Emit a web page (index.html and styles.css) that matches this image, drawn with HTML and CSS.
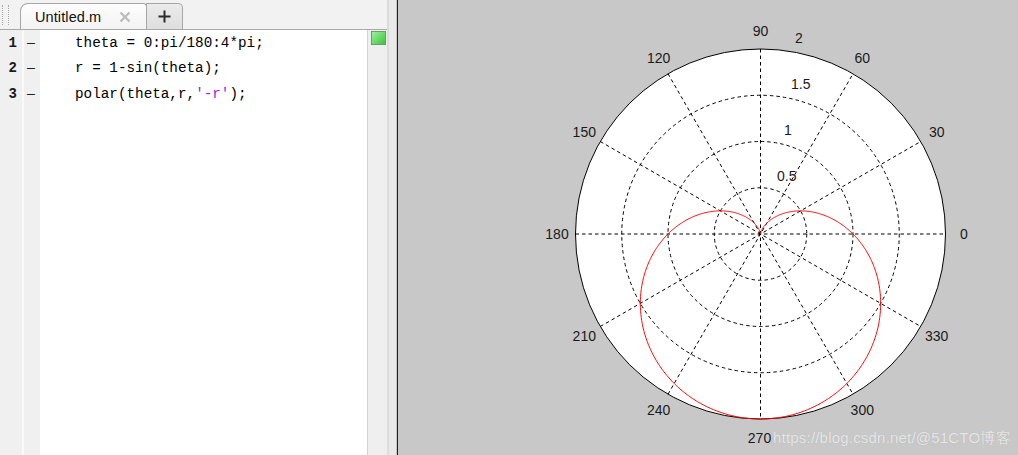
FILE: index.html
```html
<!DOCTYPE html>
<html>
<head>
<meta charset="utf-8">
<title>polar</title>
<link rel="stylesheet" href="styles.css">
</head>
<body>
<div class="app">
  <section class="editor">
    <div class="tabbar">
      <div class="grip"></div>
      <div class="tab active">
        <span class="tab-title">Untitled.m</span>
        <svg class="tab-close" width="12" height="12" viewBox="0 0 12 12"><path d="M1.5 1.5 L10.5 10.5 M10.5 1.5 L1.5 10.5" stroke="#bdbdbd" stroke-width="2.4" fill="none"/></svg>
      </div>
      <div class="tab add">
        <svg width="13" height="13" viewBox="0 0 13 13"><path d="M6.5 0.5 V12.5 M0.5 6.5 H12.5" stroke="#2a2a2a" stroke-width="2" fill="none"/></svg>
      </div>
    </div>
    <div class="editor-body">
      <div class="gutter">
        <div class="numbers">
          <div class="ln">1</div>
          <div class="ln">2</div>
          <div class="ln">3</div>
        </div>
        <div class="gutter-sep"></div>
        <div class="marks">
          <div class="mk">—</div>
          <div class="mk">—</div>
          <div class="mk">—</div>
        </div>
      </div>
      <div class="code">
        <div class="line">theta = 0:pi/180:4*pi;</div>
        <div class="line">r = 1-sin(theta);</div>
        <div class="line">polar(theta,r,<span class="str">'-r'</span>);</div>
      </div>
      <div class="rightcol"><div class="status-ok"></div></div>
    </div>
  </section>
  <div class="splitter"></div>
  <section class="figure">
    <svg class="plot" width="620" height="455" viewBox="0 0 620 455">
      <circle cx="362.5" cy="234" r="185" fill="#ffffff" stroke="none"/>
      <g class="grid" stroke="#000" stroke-width="1" fill="none" stroke-dasharray="3.5 3">
        <circle cx="362.5" cy="234" r="46.25"/>
        <circle cx="362.5" cy="234" r="92.5"/>
        <circle cx="362.5" cy="234" r="138.75"/>
        <line x1="177.5" y1="234" x2="547.5" y2="234"/>
        <line x1="362.5" y1="49" x2="362.5" y2="419"/>
        <line x1="202.28" y1="141.5" x2="522.72" y2="326.5"/>
        <line x1="202.28" y1="326.5" x2="522.72" y2="141.5"/>
        <line x1="270" y1="73.78" x2="455" y2="394.22"/>
        <line x1="270" y1="394.22" x2="455" y2="73.78"/>
      </g>
      <circle cx="362.5" cy="234" r="185" fill="none" stroke="#000" stroke-width="1"/>
      <polyline id="curve" fill="none" stroke="#ff0000" stroke-width="1" points=""/>
      <g class="labels">
        <text x="362.5" y="30.5">90</text>
        <text x="464.3" y="57.8">60</text>
        <text x="260.7" y="57.8">120</text>
        <text x="538.7" y="132.3">30</text>
        <text x="186.3" y="132.3">150</text>
        <text x="566" y="234">0</text>
        <text x="159" y="234">180</text>
        <text x="538.7" y="335.7">330</text>
        <text x="186.3" y="335.7">210</text>
        <text x="464.3" y="410.2">300</text>
        <text x="260.7" y="410.2">240</text>
        <text x="361.5" y="437.5">270</text>
      </g>
      <g class="rlabels">
        <text x="397" y="37.5">2</text>
        <text x="393" y="84">1.5</text>
        <text x="386" y="129.5">1</text>
        <text x="379" y="176">0.5</text>
      </g>
    </svg>
    <div class="watermark">https://blog.csdn.net/@51CTO博客</div>
  </section>
</div>
<script src="script.js"></script>
</body>
</html>
```

FILE: styles.css
```css
* { box-sizing: border-box; }
html, body { margin: 0; padding: 0; }
body {
  width: 1018px;
  height: 455px;
  overflow: hidden;
  font-family: "Liberation Sans", Arial, sans-serif;
  background: #c8c8c8;
}
.app { display: flex; height: 455px; }

.editor {
  width: 387px;
  display: flex;
  flex-direction: column;
  background: #f0f0f0;
}
.tabbar {
  height: 30px;
  display: flex;
  align-items: flex-end;
  border-bottom: 1px solid #a9a9a9;
  background: #f2f2f2;
}
.grip {
  width: 20px;
  align-self: stretch;
  padding: 5px 0 0 2px;
}
.grip::before {
  content: "";
  display: block;
  width: 5px;
  height: 20px;
  border-left: 1px dotted #a8a8a8;
  border-right: 1px dotted #a8a8a8;
}
.tab {
  height: 26px;
  display: flex;
  align-items: center;
  border: 1px solid #a6a6a6;
  border-bottom: none;
}
.tab.active {
  width: 127px;
  padding-left: 14px;
  border-radius: 8px 4px 0 0;
  background: linear-gradient(#fdfdfd, #f3f3f3);
}
.tab-title {
  font-size: 14.5px;
  color: #111;
  letter-spacing: 0.1px;
}
.tab-close { margin-left: 18px; }
.tab.add {
  width: 37px;
  margin-left: -1px;
  justify-content: center;
  border-radius: 0 5px 0 0;
  background: linear-gradient(#ebebeb, #dedede);
}

.editor-body {
  flex: 1;
  display: flex;
  background: #ffffff;
}
.gutter {
  width: 40px;
  display: flex;
  background: #f0f0f0;
  font-family: "Liberation Mono", "Courier New", monospace;
  font-size: 14px;
  line-height: 25.3px;
  color: #1a1a1a;
  padding-top: 1px;
}
.numbers { width: 22px; text-align: right; padding-right: 5px; font-weight: bold; }
.gutter-sep { width: 2px; background: #f9f9f9; margin-top: -1px; }
.marks { width: 16px; padding-left: 3px; font-size: 13px; color: #222; }
.code {
  flex: 1;
  padding-left: 35px;
  padding-top: 1px;
  font-family: "Liberation Mono", "Courier New", monospace;
  font-size: 14.3px;
  line-height: 25.3px;
  color: #000;
}
.line { white-space: pre; height: 25.3px; }
.str { color: #a020f0; }
.rightcol {
  width: 20px;
  border-left: 1px solid #d4d4d4;
  background: #efefef;
  padding: 1px 0 0 3px;
}
.status-ok {
  width: 15px;
  height: 14px;
  border: 1px solid #6e9b6e;
  background: linear-gradient(135deg, #9ef09e, #3cc43c);
}

.splitter {
  width: 11px;
  background: linear-gradient(to right, #dcdcdc 0 2px, #e9e9e9 2px 9px, #c4c4c4 9px 10px, #1e1e1e 10px 11px);
}

.figure {
  flex: 1;
  position: relative;
  background: #c8c8c8;
}
.plot { display: block; }
.plot text {
  font-family: "Liberation Sans", Arial, sans-serif;
  font-size: 14px;
  fill: #1a1a1a;
  dominant-baseline: central;
}
.labels text { text-anchor: middle; }
.rlabels text { text-anchor: start; }
.watermark {
  position: absolute;
  left: 375px;
  top: 429px;
  font-size: 15px;
  letter-spacing: 0.2px;
  color: #e6e6e6;
  text-shadow: 0 0 1px #b0b0b0;
  white-space: nowrap;
}
```

FILE: script.js
```js
(function () {
  var cx = 362.5, cy = 234, s = 92.5;
  var pts = [];
  for (var i = 0; i <= 720; i++) {
    var t = i * Math.PI / 360;
    var r = (1 - Math.sin(t)) * s;
    pts.push((cx + r * Math.cos(t)).toFixed(2) + ',' + (cy - r * Math.sin(t)).toFixed(2));
  }
  document.getElementById('curve').setAttribute('points', pts.join(' '));
})();
```
